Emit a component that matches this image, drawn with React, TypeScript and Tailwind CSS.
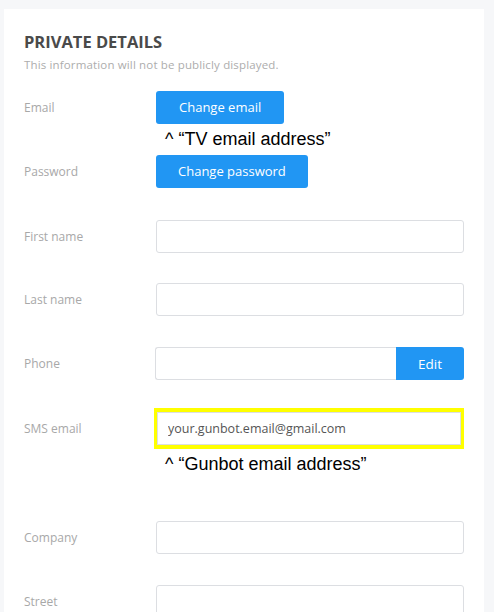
import React from 'react'

const ui = "font-['Open_Sans',sans-serif]"

const Label: React.FC<{ text: string }> = ({ text }) => (
  <div className="w-[132px] shrink-0 text-[12px] text-[#a8a8a8]">{text}</div>
)

const TextInput: React.FC<{ value?: string }> = ({ value }) => (
  <input
    readOnly
    value={value ?? ''}
    className={`h-[33px] w-[308px] rounded-[3px] border border-[#dcdee2] bg-white px-3 text-[12.5px] text-[#555] outline-none ${ui}`}
  />
)

const Note: React.FC<{ text: string }> = ({ text }) => (
  <div className="ml-[141px] font-['Liberation_Sans',Arial,sans-serif] text-[18px] leading-[31px] text-black">
    ^ {text}
  </div>
)

export default function App() {
  return (
    <div className={`min-h-screen bg-[#f6f7f9] pl-[4px] pt-[9px] pr-[10px] ${ui}`}>
      <div className="min-h-[603px] w-[480px] bg-white px-5 pt-[22px]">
        <h2 className="text-[16.5px] font-bold leading-[22px] text-[#4a4a4a]">PRIVATE DETAILS</h2>
        <p className="mt-[3px] text-[11.5px] tracking-[0.15px] text-[#adadad]">This information will not be publicly displayed.</p>

        <div className="mt-[18px] flex items-center">
          <Label text="Email" />
          <button className="h-[33px] rounded-[3px] bg-[#2196f3] px-[23px] text-[13px] text-white">Change email</button>
        </div>
        <Note text="“TV email address”" />
        <div className="flex items-center">
          <Label text="Password" />
          <button className="h-[33px] rounded-[3px] bg-[#2196f3] px-[22px] text-[13px] text-white">Change password</button>
        </div>

        <div className="mt-[32px] flex items-center">
          <Label text="First name" />
          <TextInput />
        </div>
        <div className="mt-[30px] flex items-center">
          <Label text="Last name" />
          <TextInput />
        </div>
        <div className="mt-[31px] flex items-center">
          <Label text="Phone" />
          <div className="-ml-px flex">
            <input readOnly className="h-[33px] w-[241px] rounded-l-[3px] border border-r-0 border-[#dcdee2] bg-white outline-none" />
            <button className="h-[33px] w-[68px] rounded-r-[3px] bg-[#2196f3] text-[13.5px] text-white">Edit</button>
          </div>
        </div>

        <div className="mt-[28px] flex items-center">
          <Label text="SMS email" />
          <div className="-ml-[2px] w-[312px] border-x-[3px] border-y-4 border-[#ffff00]">
            <input
              readOnly
              value="your.gunbot.email@gmail.com"
              className="h-[33px] w-full border border-[#dcdee2] bg-white px-[10px] text-[12.5px] text-[#555] outline-none"
            />
          </div>
        </div>
        <Note text="“Gunbot email address”" />

        <div className="mt-[41px] flex items-center">
          <Label text="Company" />
          <TextInput />
        </div>
        <div className="mt-[31px] flex items-center">
          <Label text="Street" />
          <TextInput />
        </div>
      </div>
    </div>
  )
}
